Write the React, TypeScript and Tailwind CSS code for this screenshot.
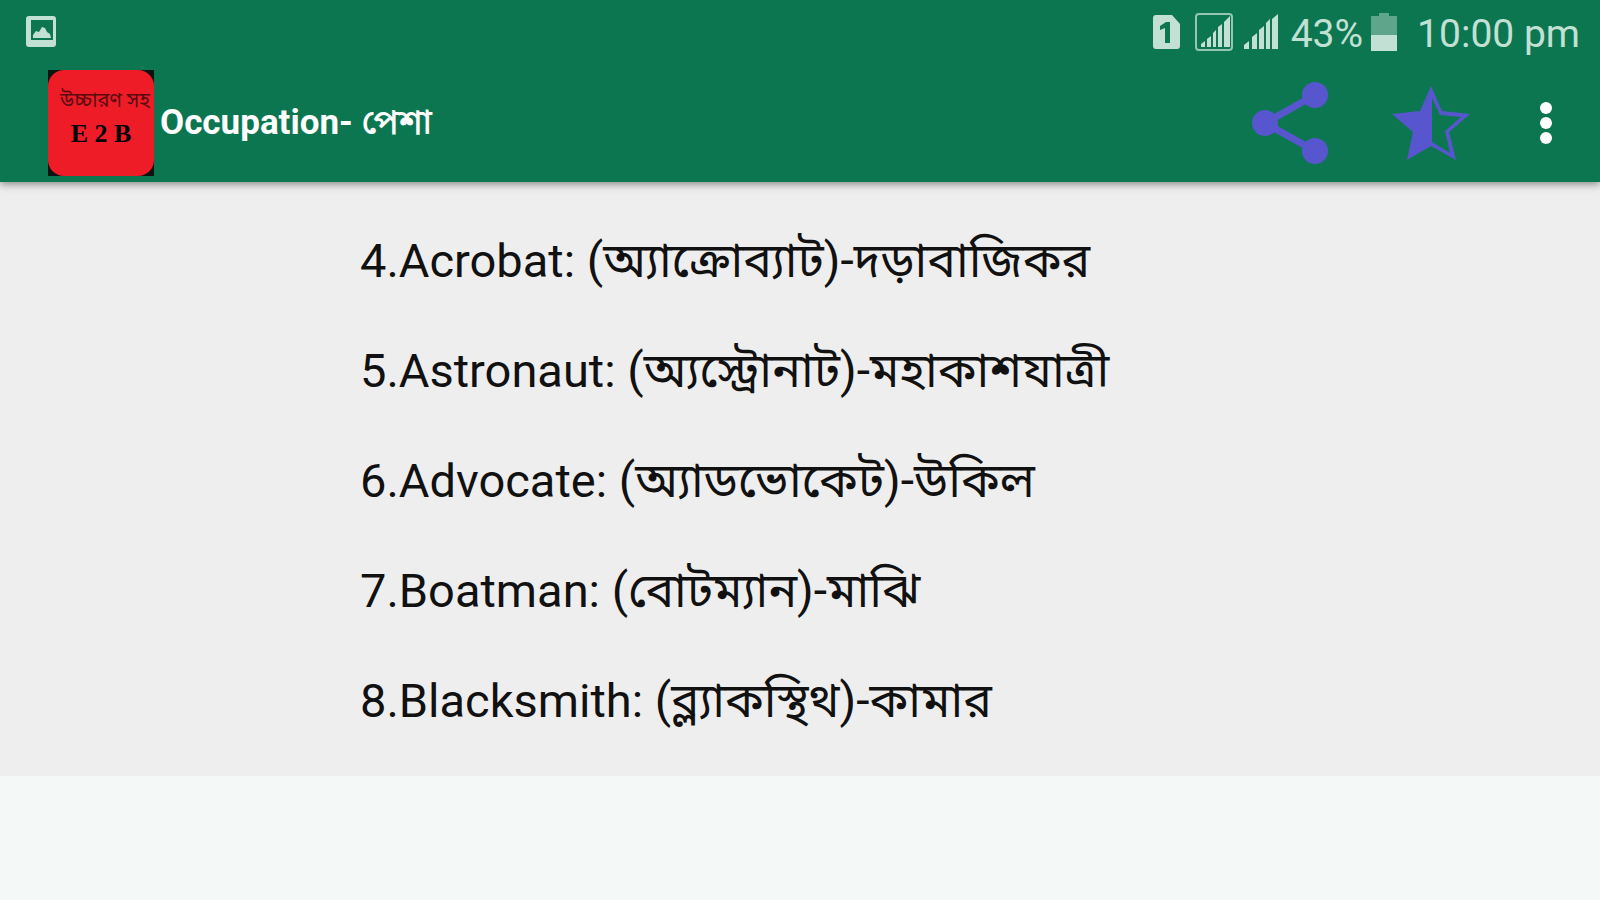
import React from "react";

const occupations = [
  { id: 4, word: "Acrobat", reading: "অ্যাক্রোব্যাট", meaning: "দড়াবাজিকর" },
  { id: 5, word: "Astronaut", reading: "অ্যস্ট্রোনাট", meaning: "মহাকাশযাত্রী" },
  { id: 6, word: "Advocate", reading: "অ্যাডভোকেট", meaning: "উকিল" },
  { id: 7, word: "Boatman", reading: "বোটম্যান", meaning: "মাঝি" },
  { id: 8, word: "Blacksmith", reading: "ব্ল্যাকস্থিথ", meaning: "কামার" },
];

const StatusBar = () => (
  <div className="flex h-16 items-center justify-between pl-6 pr-5 text-[#c3e0d5]">
    <svg viewBox="0 0 34 34" className="h-[34px] w-[34px]" fill="currentColor">
      <path fillRule="evenodd" d="M5 1h24a3 3 0 0 1 3 3v25a3 3 0 0 1-3 3H5a3 3 0 0 1-3-3V4a3 3 0 0 1 3-3ZM7 5v20h22V5Z" />
      <path d="M9 23v-3l3-4 3 1 3-5 3 1 2 4 3 2 1 4Z" />
    </svg>

    <div className="flex items-center">
      <svg viewBox="0 0 28 36" className="h-9 w-7" fill="currentColor">
        <path fillRule="evenodd" d="M3 1h16l8 9v22a3 3 0 0 1-3 3H3a3 3 0 0 1-3-3V4a3 3 0 0 1 3-3ZM13 8l-6 4v4l5-2v15h5V8Z" />
      </svg>
      <svg viewBox="0 0 38 38" className="ml-3.5 h-[38px] w-[38px]" fill="currentColor">
        <rect x="1" y="1" width="36" height="36" rx="3" fill="none" stroke="currentColor" strokeWidth="2" opacity="0.75" />
        <path d="M6 31l4-3v6H6zM12 26l4-3v11h-4zM18 20l3-3v17h-3zM23 14l4-3v23h-4zM29 9l6-6v31h-6z" />
      </svg>
      <svg viewBox="0 0 36 36" className="ml-2.5 h-9 w-9" fill="currentColor">
        <path d="M1 31l5-4v8H1zM9 23l5-4v16H9zM16 16l5-4v23h-5zM23 9l4-4v30h-4zM29 5l6-5v35h-6z" />
      </svg>
      <span className="ml-3 pt-1 text-[39px] leading-10">43%</span>
      <svg viewBox="0 0 26 38" className="ml-2 h-[38px] w-[26px]" fill="currentColor">
        <path d="M8 0h10v3h8v19H0V3h8z" opacity="0.45" />
        <path d="M0 22h26v16H0z" />
      </svg>
      <span className="ml-5 pt-1 text-[39px] leading-10">10:00 pm</span>
    </div>
  </div>
);

const AppLogo = () => (
  <div className="h-[106px] w-[106px] overflow-hidden bg-[#0c1410]">
    <div className="flex h-full flex-col items-center rounded-2xl bg-[#ed1c27] pt-4 text-black">
      <span className="pl-2 text-[20px] leading-7 whitespace-nowrap text-[#5c0a10]">উচ্চারণ সহ</span>
      <span className="font-['Liberation_Serif',serif] text-[26px] leading-10 font-bold whitespace-nowrap">E 2 B</span>
    </div>
  </div>
);

const Toolbar = () => (
  <div className="flex h-[118px] items-center pr-12 pl-12">
    <AppLogo />
    <h1 className="ml-1.5 text-[35px] leading-10 font-bold text-white">
      Occupation- <span className="font-medium">পেশা</span>
    </h1>

    <div className="ml-auto flex items-center">
      <button type="button" aria-label="Share">
        <svg viewBox="0 0 76 82" className="h-[82px] w-[76px]" fill="#5856cf">
          <path d="M13 41 63 13M13 41l50 28" stroke="#5856cf" strokeWidth="7" />
          <circle cx="13" cy="41" r="13" />
          <circle cx="63" cy="13" r="13" />
          <circle cx="63" cy="69" r="13" />
        </svg>
      </button>
      <button type="button" aria-label="Favourite" className="ml-16">
        <svg viewBox="0 0 78 74" className="h-[74px] w-[78px]" fill="#5856cf">
          <path fillRule="evenodd" d="M39 0 50 25 78 28 57 46 64 74 39 60 15 74 21 46 0 28 28 25ZM40 12V56L58 67 53 45 69 31 48 29Z" />
        </svg>
      </button>
      <button type="button" aria-label="More options" className="ml-[70px]">
        <svg viewBox="0 0 12 42" className="h-[42px] w-3" fill="white">
          <circle cx="6" cy="6" r="6" />
          <circle cx="6" cy="21" r="6" />
          <circle cx="6" cy="36" r="6" />
        </svg>
      </button>
    </div>
  </div>
);

export default function App() {
  return (
    <div className="min-h-screen bg-[#f4f9f8] font-['Roboto','Noto_Sans_Bengali','Noto_Sans',sans-serif]">
      <header className="relative bg-[#0c7651] shadow-[0_2px_8px_rgba(0,0,0,0.45)]">
        <StatusBar />
        <Toolbar />
      </header>

      <main className="bg-[#eeeeee] pt-6 pb-5">
        <ul className="pl-[360px]">
          {occupations.map(({ id, word, reading, meaning }) => (
            <li key={id} className="h-[110px] text-[47px] leading-[110px] whitespace-nowrap text-[#111111]">
              {id}.{word}: <span className="text-[48px]">({reading})-{meaning}</span>
            </li>
          ))}
        </ul>
      </main>
    </div>
  );
}
